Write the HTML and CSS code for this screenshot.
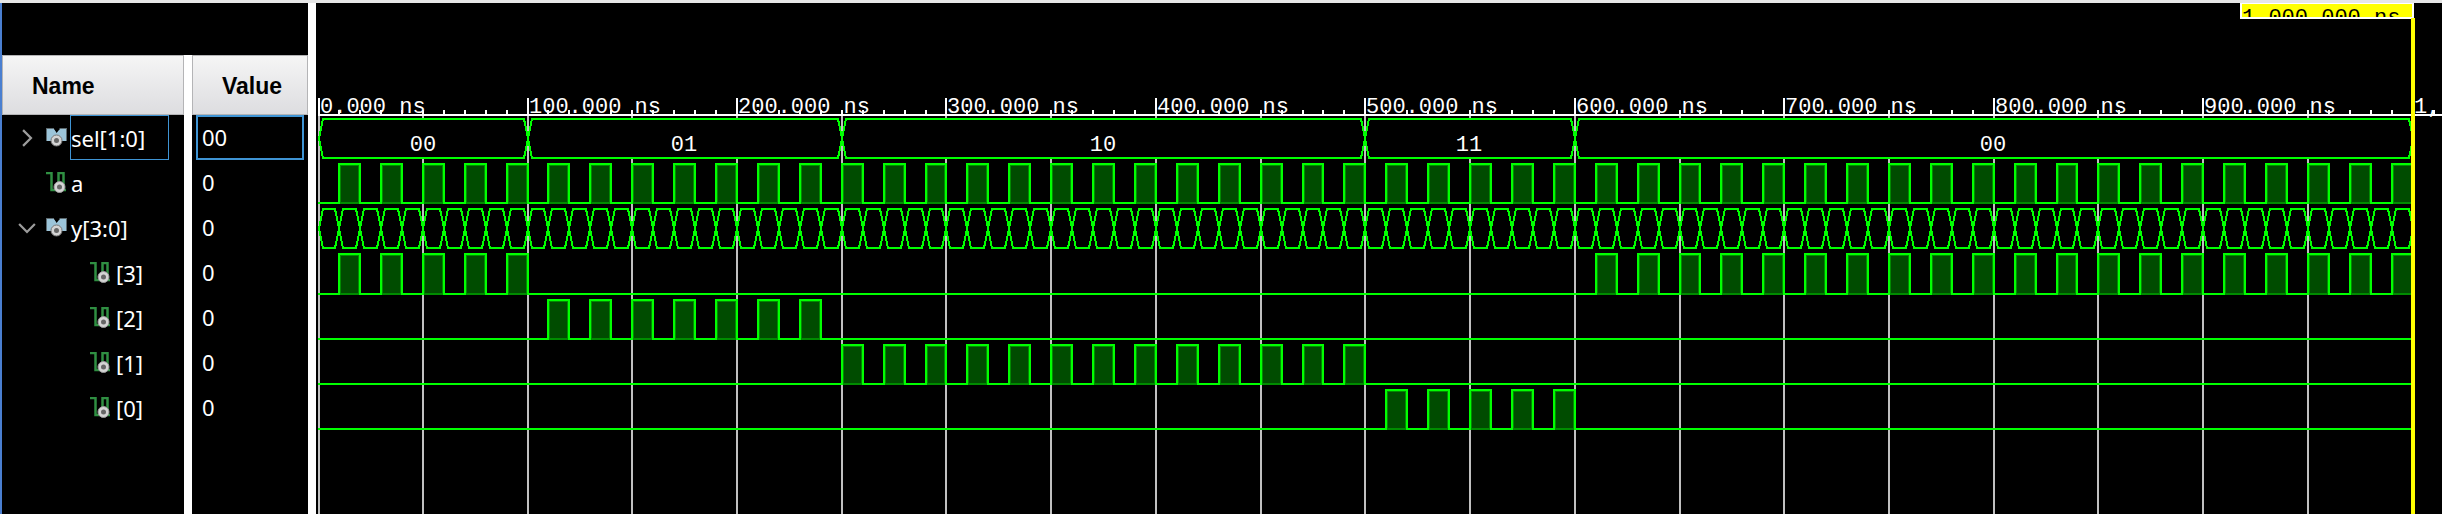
FILE: index.html
```html
<!DOCTYPE html>
<html lang="en">
<head>
<meta charset="utf-8">
<title>Waveform viewer</title>
<link rel="stylesheet" href="styles.css">
</head>
<body>
<svg class="defs" aria-hidden="true">
  <symbol id="icon-bus" viewBox="0 0 21 19">
    <path d="M0 1H8L11 5V13H0Z" fill="#9cc5da"/>
    <path d="M21 1H14L10 5V13H21Z" fill="#9cc5da"/>
    <path d="M8 0H13.500L10.700 5Z" fill="#000"/>
    <path d="M0 .5H8M13.500 .5H21M.5 1V13M20.500 1V13" stroke="#5d6a70" fill="none"/>
    <circle cx="10.500" cy="12.500" r="5.500" fill="#d4d4d4" stroke="#777" stroke-width="1"/>
    <circle cx="10.500" cy="12.500" r="2.500" fill="#666"/>
  </symbol>
  <symbol id="icon-net" viewBox="0 0 21 21">
    <path d="M0 1H5.500V18H12.500V1H17.500V18H20" fill="none" stroke="#2f8f42" stroke-width="2.500"/>
    <circle cx="13.500" cy="15" r="5.500" fill="#d4d4d4" stroke="#999" stroke-width="1"/>
    <circle cx="13.500" cy="15" r="2.500" fill="#666"/>
  </symbol>
  <symbol id="icon-chevron" viewBox="0 0 16 16">
    <path d="M4.500 1L11.500 8L4.500 15" fill="none" stroke="#9c9c9c" stroke-width="2"/>
  </symbol>
</svg>
<main class="viewer">
  <section class="signals">
    <div class="column names">
      <h2 class="head">Name</h2>
      <ul class="rows">
        <li class="row selected"><button class="toggle" aria-label="Expand sel"><svg><use href="#icon-chevron"/></svg></button><svg class="icon"><use href="#icon-bus"/></svg><span class="label">sel[1:0]</span></li>
        <li class="row"><span class="toggle"></span><svg class="icon"><use href="#icon-net"/></svg><span class="label">a</span></li>
        <li class="row"><button class="toggle open" aria-label="Collapse y"><svg><use href="#icon-chevron"/></svg></button><svg class="icon"><use href="#icon-bus"/></svg><span class="label">y[3:0]</span></li>
        <li class="row child"><svg class="icon"><use href="#icon-net"/></svg><span class="label">[3]</span></li>
        <li class="row child"><svg class="icon"><use href="#icon-net"/></svg><span class="label">[2]</span></li>
        <li class="row child"><svg class="icon"><use href="#icon-net"/></svg><span class="label">[1]</span></li>
        <li class="row child"><svg class="icon"><use href="#icon-net"/></svg><span class="label">[0]</span></li>
      </ul>
    </div>
    <div class="column values">
      <h2 class="head">Value</h2>
      <ul class="rows">
        <li class="row selected">00</li>
        <li class="row">0</li>
        <li class="row">0</li>
        <li class="row">0</li>
        <li class="row">0</li>
        <li class="row">0</li>
        <li class="row">0</li>
      </ul>
    </div>
  </section>
  <section class="wave">
    <svg id="plot" class="plot" role="img" aria-label="Signal waveforms"></svg>
  </section>
</main>
<script src="wave.js"></script>
</body>
</html>
```
FILE: styles.css
```css
* { box-sizing: border-box; }

body {
  margin: 0;
  background: #000;
  color: #fff;
  font-family: "Noto Sans", "Open Sans", sans-serif;
  font-size: 22px;
}

.defs { display: none; }

.viewer {
  display: flex;
  min-height: 100vh;
  border-top: 3px solid #e6e6e6;
  overflow: hidden;
}

.signals {
  display: flex;
  flex: none;
  padding-top: 52px;
  border-left: 2px solid #4a7fd0;
  border-right: 8px solid #fff;
}

.column { display: flex; flex-direction: column; }
.names { width: 182px; }
.values { width: 124px; border-left: 8px solid #fff; }

.head {
  height: 60px;
  margin: 0;
  padding-left: 29px;
  border: 1px solid #b4b4b6;
  background: linear-gradient(#f5f5f5, #dddde0);
  color: #000;
  font: bold 23px/60px "Liberation Sans", Arial, sans-serif;
}

.rows { margin: 0; padding: 0; list-style: none; }

.row { display: flex; align-items: center; height: 45px; }
.names .row { padding-left: 16px; }
.names .child { padding-left: 88px; }

.values .row {
  margin: 0 4px;
  padding-left: 4px;
  border: 2px solid transparent;
  line-height: 43px;
}
.values .selected { border-color: #3f94d4; }

.toggle {
  display: flex;
  width: 18px;
  margin-right: 10px;
  padding: 0;
  border: 0;
  background: none;
}
.toggle svg { width: 18px; height: 18px; }
.open svg { transform: rotate(90deg); }

.icon { width: 21px; height: 21px; margin-right: 3px; }

.label { padding-top: 2px; line-height: 41px; border: 1px solid transparent; }
.child .label { padding-left: 1px; }
.selected .label { width: 99px; border-color: #3f94d4; }

.wave { flex: 1; min-width: 0; display: flex; }
.plot { width: 100%; overflow: hidden; }

.plot text { font-family: "Liberation Mono", "Courier New", monospace; font-size: 22px; fill: #fff; }
.plot .middle { text-anchor: middle; }
.plot .cursor-text { fill: #000; }
.grid { fill: #c0c0c0; }
.ruler { fill: #fff; }
.trace { fill: none; stroke: #0f0; stroke-width: 2; shape-rendering: crispEdges; }
.bus { fill: #000; stroke: #0f0; stroke-width: 2; shape-rendering: crispEdges; }
.body { fill: #004c00; }
.edge { fill: #008c00; }
.cursor { fill: #ff0; }
```
FILE: wave.js
```js
const plot = document.getElementById('plot');
const SVG = 'http://www.w3.org/2000/svg';
const END = 1000;

const sel = [[0, 100, '00'], [100, 250, '01'], [250, 500, '10'], [500, 600, '11'], [600, 1000, '00']];

// Pulses are 10 ns wide and start at every odd multiple of 10 ns inside the ranges.
const nets = [
  { top: 161, base: 200, ranges: [[0, 1000]] },
  { top: 251, base: 291, ranges: [[0, 100], [600, 1000]] },
  { top: 297, base: 336, ranges: [[100, 250]] },
  { top: 342, base: 381, ranges: [[250, 500]] },
  { top: 387, base: 426, ranges: [[500, 600]] }
];

function add(name, attrs, text) {
  const el = document.createElementNS(SVG, name);
  for (const key in attrs) el.setAttribute(key, attrs[key]);
  if (text) el.textContent = text;
  plot.appendChild(el);
  return el;
}

function rect(cls, x, y, width, height) {
  return add('rect', { class: cls, x, y, width, height });
}

function draw() {
  plot.replaceChildren();
  const width = plot.clientWidth;
  const height = plot.clientHeight;
  const scale = (width - 31.5) / END;
  const px = t => Math.max(3, Math.floor(2.6 + t * scale));

  for (let t = 0; t <= END; t += 50) rect('grid', px(t) - 1, 113, 2, height - 113);

  const hexagon = (from, to, top, base) => {
    const a = px(from), b = px(to), mid = (top + base) / 2;
    add('path', { class: 'bus', d: `M${a} ${mid}L${a + 4} ${top}H${b - 4}L${b} ${mid}L${b - 4} ${base}H${a + 4}Z` });
  };

  for (const [from, to, value] of sel) {
    hexagon(from, to, 116, 155);
    add('text', { class: 'middle', x: Math.round((px(from) + px(to)) / 2) - 1, y: 148 }, value);
  }
  for (let t = 0; t < END; t += 10) hexagon(t, t + 10, 206, 245);

  for (const { top, base, ranges } of nets) {
    let path = `M2 ${base}`;
    for (const [from, to] of ranges) {
      const first = from % 20 ? from : from + 10;
      for (let t = first; t < to; t += 20) {
        const a = px(t), b = px(t + 10);
        rect('edge', a + 1, top + 1, b - a - 2, base - top);
        rect('body', a + 2, top + 2, b - a - 4, base - top - 3);
        path += `H${a}V${top}H${b}V${base + 1}M${b - 1} ${base}`;
      }
    }
    if (px(END) > 0) path += `H${px(END)}`;
    add('path', { class: 'trace', d: path });
  }

  rect('ruler', 2, 111, width - 2, 2);
  for (let t = 0; px(t) < width; t += 10) {
    const major = t % 100 === 0;
    rect('ruler', px(t) - 1, major ? 95 : 107, 2, major ? 16 : 4);
    if (major) {
      // Only the first characters of the closing label fit beside the cursor.
      const label = t === END ? '1,' : t + '.000 ns';
      add('text', { x: px(t) + 1, y: 110 }, label);
    }
  }

  const x = px(END);
  rect('ruler', x - 173, 0, 174, 16);
  rect('cursor', x - 171, 1, 170, 13);
  const clip = add('svg', { x: x - 171, y: 1, width: 170, height: 13 });
  const caption = add('text', { class: 'cursor-text', x: 0, y: 20 }, '1,000.000 ns');
  clip.appendChild(caption);
  rect('cursor', x - 2, 15, 4, height - 15);
}

draw();
window.addEventListener('resize', draw);
```
